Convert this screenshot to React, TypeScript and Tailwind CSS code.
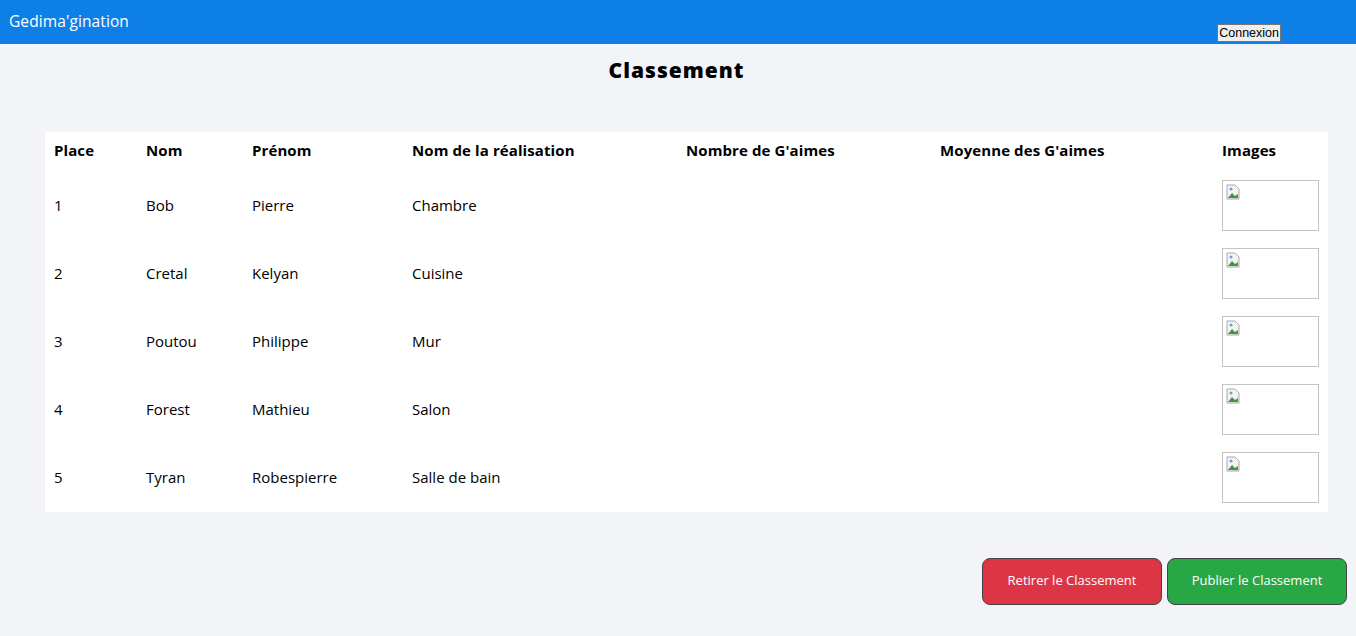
const rows = [
  { place: 1, nom: "Bob", prenom: "Pierre", realisation: "Chambre" },
  { place: 2, nom: "Cretal", prenom: "Kelyan", realisation: "Cuisine" },
  { place: 3, nom: "Poutou", prenom: "Philippe", realisation: "Mur" },
  { place: 4, nom: "Forest", prenom: "Mathieu", realisation: "Salon" },
  { place: 5, nom: "Tyran", prenom: "Robespierre", realisation: "Salle de bain" },
];

function BrokenImage() {
  return (
    <div className="w-[97px] h-[51px] border border-[#c4c4c4] bg-white relative">
      <svg className="absolute left-[3px] top-[3px]" width="14" height="16" viewBox="0 0 14 16">
        <path d="M1 1h8l4 4v10H1z" fill="#f4f4f4" stroke="#a8a8a8" strokeWidth="1" />
        <path d="M2 14l4-5 3 3 3-2v4z" fill="#3c9a3c" />
        <circle cx="5" cy="5" r="1.5" fill="#6aa0d8" />
      </svg>
    </div>
  );
}

export default function App() {
  return (
    <div className="min-h-[636px] bg-[#f3f4f8] font-['Open_Sans',sans-serif] text-black">
      <header className="h-[44px] bg-[#0e7fe6] flex items-start justify-between pl-[9px] pr-[75px]">
        <span className="text-white text-[15.5px] mt-[10px] tracking-[0.1px]">Gedima'gination</span>
        <button className="mt-[24px] h-[18px] px-[1px] text-[12.5px] leading-[14px] font-['Liberation_Sans',sans-serif] bg-[#efefef] border border-[#767676] text-black">
          Connexion
        </button>
      </header>

      <h1 className="text-center text-[21px] font-extrabold mt-[11px] tracking-[1px] mr-[3px]">Classement</h1>

      <div className="mx-[45px] mt-[45px] w-[1283px] bg-white">
        <table className="w-[1283px] table-fixed border-collapse">
          <colgroup>
            <col className="w-[92px]" />
            <col className="w-[106px]" />
            <col className="w-[160px]" />
            <col className="w-[274px]" />
            <col className="w-[254px]" />
            <col className="w-[282px]" />
            <col className="w-[115px]" />
          </colgroup>
          <thead>
            <tr className="h-[40px] text-left text-[15px] font-extrabold tracking-[0.1px]">
              <th className="pl-[9px] pb-[2px]">Place</th>
              <th className="pl-[9px] pb-[2px]">Nom</th>
              <th className="pl-[9px] pb-[2px]">Prénom</th>
              <th className="pl-[9px] pb-[2px]">Nom de la réalisation</th>
              <th className="pl-[9px] pb-[2px]">Nombre de G'aimes</th>
              <th className="pl-[9px] pb-[2px]">Moyenne des G'aimes</th>
              <th className="pl-[9px] pb-[2px]">Images</th>
            </tr>
          </thead>
          <tbody>
            {rows.map((r) => (
              <tr key={r.place} className="h-[68px] text-[15px]">
                <td className="pl-[9px]">{r.place}</td>
                <td className="pl-[9px]">{r.nom}</td>
                <td className="pl-[9px]">{r.prenom}</td>
                <td className="pl-[9px]">{r.realisation}</td>
                <td className="pl-[9px]"></td>
                <td className="pl-[9px]"></td>
                <td className="pl-[9px]">
                  <BrokenImage />
                </td>
              </tr>
            ))}
          </tbody>
        </table>
      </div>

      <div className="flex justify-end gap-[5px] pr-[9px] mt-[46px] pb-[31px]">
        <button className="w-[180px] h-[47px] rounded-[8px] border border-[#444] bg-[#dc3545] text-white text-[13px]">
          Retirer le Classement
        </button>
        <button className="w-[180px] h-[47px] rounded-[8px] border border-[#444] bg-[#28a745] text-white text-[13px]">
          Publier le Classement
        </button>
      </div>
    </div>
  );
}
